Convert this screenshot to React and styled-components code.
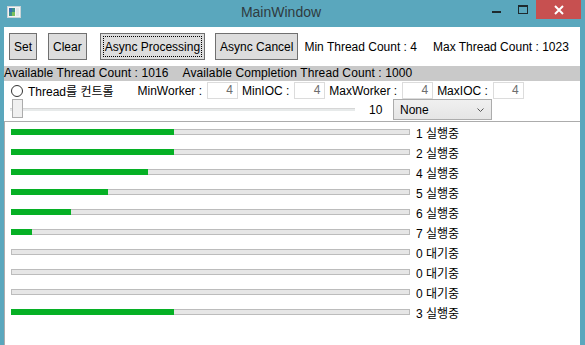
import React from "react";
import styled, { createGlobalStyle } from "styled-components";

const GlobalStyle = createGlobalStyle`
  html, body {
    margin: 0;
    padding: 0;
    background: #5aa7bd;
  }
  * {
    box-sizing: border-box;
  }
`;

const FONT = `"Liberation Sans", "Noto Sans CJK KR", sans-serif`;

const Window = styled.div`
  width: 585px;
  height: 345px;
  display: flex;
  flex-direction: column;
  background: #5aa7bd;
  font-family: ${FONT};
  font-size: 12px;
  color: #000;
  overflow: hidden;
`;

const TitleBar = styled.div`
  height: 27px;
  display: flex;
  align-items: flex-start;
`;

const AppIcon = styled.svg`
  margin: 6px 0 0 7px;
  flex-shrink: 0;
`;

const Title = styled.div`
  flex: 1;
  text-align: center;
  font-family: "Liberation Sans", sans-serif;
  font-size: 14px;
  line-height: 24px;
  color: #2f3b40;
  padding-left: 58px;
`;

const Controls = styled.div`
  display: flex;
  align-items: flex-start;
  margin-right: 4px;
`;

const CtrlButton = styled.div`
  width: ${(p) => p.w}px;
  height: 19px;
  display: flex;
  align-items: center;
  justify-content: center;
  background: ${(p) => (p.close ? "#c75050" : "transparent")};
`;

const Client = styled.div`
  flex: 1;
  margin: 0 5px 0 4px;
  background: #fff;
  display: flex;
  flex-direction: column;
  min-height: 0;
`;

const Toolbar = styled.div`
  display: flex;
  align-items: center;
  padding: 6px 0 0 5px;
  height: 33px;
`;

const Button = styled.div`
  height: 27px;
  padding: 0 4px;
  margin-right: ${(p) => p.gap || 10}px;
  display: flex;
  align-items: center;
  justify-content: center;
  background: #dddddd;
  border: 1px solid #707070;
  white-space: nowrap;
  position: relative;
  ${(p) =>
    p.focused &&
    `
    &::after {
      content: "";
      position: absolute;
      inset: 2px;
      border: 1px dotted #000;
    }
  `}
`;

const Info = styled.span`
  margin-left: ${(p) => p.ml || 0}px;
  white-space: nowrap;
`;

const StatusBand = styled.div`
  margin-top: 6px;
  height: 15px;
  line-height: 15px;
  background: #c9c9c9;
  display: flex;
  white-space: nowrap;
`;

const BandText = styled.span`
  margin-right: 14px;
  letter-spacing: 0.1px;
`;

const ControlRow = styled.div`
  margin-top: 1px;
  height: 17px;
  display: flex;
  align-items: center;
  white-space: nowrap;
`;

const Radio = styled.span`
  width: 12px;
  height: 12px;
  border-radius: 50%;
  border: 1px solid #333;
  background: #fff;
  margin: 0 5px 0 7px;
`;

const Label = styled.span`
  margin-left: ${(p) => p.ml || 0}px;
  margin-right: 5px;
`;

const NumBox = styled.div`
  width: 31px;
  height: 17px;
  border: 1px solid #dcdcdc;
  color: #6d6d6d;
  text-align: right;
  padding-right: 4px;
  line-height: 15px;
  margin-right: 4px;
`;

const SliderRow = styled.div`
  height: 21px;
  display: flex;
  align-items: center;
`;

const Slider = styled.div`
  width: 345px;
  margin-left: 6px;
  height: 21px;
  position: relative;
  display: flex;
  align-items: center;
`;

const Track = styled.div`
  width: 100%;
  height: 3px;
  background: #e7eaea;
  border-top: 1px solid #d6d6d6;
`;

const Thumb = styled.div`
  position: absolute;
  left: 2px;
  top: 0;
  width: 11px;
  height: 19px;
  background: #f0f0f0;
  border: 1px solid #acacac;
`;

const SliderValue = styled.span`
  margin-left: 14px;
  width: 15px;
`;

const Combo = styled.div`
  margin-left: 9px;
  width: 99px;
  height: 21px;
  border: 1px solid #acacac;
  background: linear-gradient(#f0f0f0, #e5e5e5);
  display: flex;
  align-items: center;
  justify-content: space-between;
  padding: 0 7px 0 6px;
`;

const List = styled.div`
  flex: 1;
  border-top: 1px solid #acacac;
  border-left: 1px solid #acacac;
  padding: 0 0 0 6px;
  margin-top: 1px;
`;

const Row = styled.div`
  height: 20px;
  display: flex;
  align-items: center;
  white-space: nowrap;
`;

const Bar = styled.div`
  width: 399px;
  height: 6px;
  background: #e6e6e6;
  border: 1px solid #bcbcbc;
  margin-right: 6px;
  position: relative;
`;

const Fill = styled.div`
  position: absolute;
  left: -1px;
  top: -1px;
  bottom: -1px;
  background: #06b025;
`;

const rows = [
  { n: 1, state: "실행중", pct: 41 },
  { n: 2, state: "실행중", pct: 41 },
  { n: 4, state: "실행중", pct: 34.5 },
  { n: 5, state: "실행중", pct: 24.5 },
  { n: 6, state: "실행중", pct: 15 },
  { n: 7, state: "실행중", pct: 5.3 },
  { n: 0, state: "대기중", pct: 0 },
  { n: 0, state: "대기중", pct: 0 },
  { n: 0, state: "대기중", pct: 0 },
  { n: 3, state: "실행중", pct: 41 },
];

const App = () => (
  <>
    <GlobalStyle />
    <Window>
      <TitleBar>
        <AppIcon width="14" height="12" viewBox="0 0 14 12">
          <rect x="0.5" y="0.5" width="13" height="11" fill="#f4f4f4" stroke="#c9d3d6" />
          <rect x="2" y="2" width="6" height="8" fill="#3c8f8a" />
          <rect x="2" y="2" width="3" height="4" fill="#3a6fb0" />
          <rect x="5" y="6" width="3" height="4" fill="#7bbf5c" />
          <rect x="9" y="2" width="3" height="8" fill="#dfe7ea" />
        </AppIcon>
        <Title>MainWindow</Title>
        <Controls>
          <CtrlButton w={27}>
            <svg width="9" height="9" viewBox="0 0 9 9">
              <rect x="0" y="6" width="9" height="2" fill="#1e2a2e" />
            </svg>
          </CtrlButton>
          <CtrlButton w={26}>
            <svg width="10" height="9" viewBox="0 0 10 9">
              <rect x="0.5" y="0.5" width="9" height="8" fill="none" stroke="#1e2a2e" />
              <rect x="0" y="0" width="10" height="2" fill="#1e2a2e" />
            </svg>
          </CtrlButton>
          <CtrlButton w={45} close>
            <svg width="10" height="10" viewBox="0 0 10 10">
              <path d="M1 1 L9 9 M9 1 L1 9" stroke="#fff" strokeWidth="2" />
            </svg>
          </CtrlButton>
        </Controls>
      </TitleBar>
      <Client>
        <Toolbar>
          <Button gap={11}>Set</Button>
          <Button gap={13}>Clear</Button>
          <Button focused>Async Processing</Button>
          <Button gap={6}>Async Cancel</Button>
          <Info>Min Thread Count : 4</Info>
          <Info ml={16}>Max Thread Count : 1023</Info>
        </Toolbar>
        <StatusBand>
          <BandText>Available Thread Count : 1016</BandText>
          <BandText>Available Completion Thread Count : 1000</BandText>
        </StatusBand>
        <ControlRow>
          <Radio />
          <span>Thread를 컨트롤</span>
          <Label ml={24}>MinWorker :</Label>
          <NumBox>4</NumBox>
          <Label>MinIOC :</Label>
          <NumBox>4</NumBox>
          <Label>MaxWorker :</Label>
          <NumBox>4</NumBox>
          <Label>MaxIOC :</Label>
          <NumBox>4</NumBox>
        </ControlRow>
        <SliderRow>
          <Slider>
            <Track />
            <Thumb />
          </Slider>
          <SliderValue>10</SliderValue>
          <Combo>
            <span>None</span>
            <svg width="7" height="4" viewBox="0 0 7 4">
              <path d="M0.5 0.5 L3.5 3.5 L6.5 0.5" fill="none" stroke="#555" />
            </svg>
          </Combo>
        </SliderRow>
        <List>
          {rows.map((r, i) => (
            <Row key={i}>
              <Bar>
                {r.pct > 0 && <Fill style={{ width: `${r.pct}%` }} />}
              </Bar>
              <span>
                {r.n} {r.state}
              </span>
            </Row>
          ))}
        </List>
      </Client>
    </Window>
  </>
);

export default App;
